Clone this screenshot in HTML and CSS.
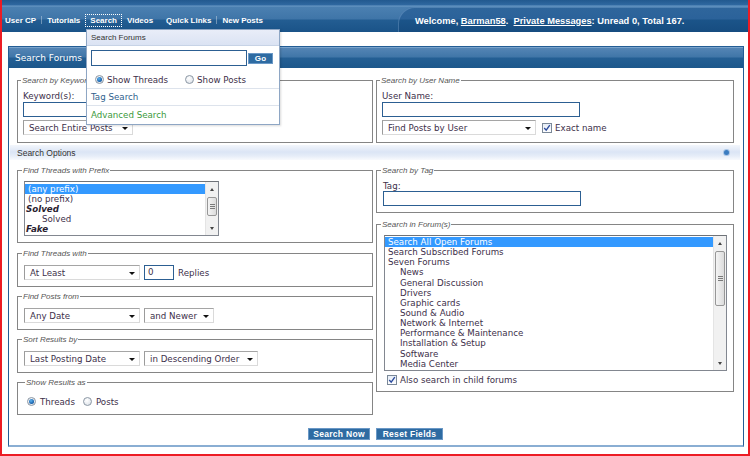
FILE: index.html
```html
<!DOCTYPE html>
<html>
<head>
<meta charset="utf-8">
<title>Search Forums</title>
<link rel="stylesheet" href="styles.css">
</head>
<body>
<div class="frame">
  <header class="navbar">
    <nav class="nav">
      <a class="nav-item first">User CP</a><span class="sep"></span>
      <a class="nav-item">Tutorials</a>
      <a class="nav-item active">Search</a>
      <a class="nav-item">Videos</a>
      <a class="nav-item wide">Quick Links</a><span class="sep"></span>
      <a class="nav-item">New Posts</a>
    </nav>
    <div class="welcome">Welcome, <u>Barman58</u>.&nbsp;&nbsp;<u>Private Messages</u>: Unread 0, Total 167.</div>
  </header>

  <main class="content">
    <section class="panel">
      <div class="panel-head">Search Forums</div>
      <div class="panel-body">
        <div class="cols">
          <fieldset class="fs fs-top">
            <legend>Search by Keyword</legend>
            <div class="label">Keyword(s):</div>
            <div class="input w-wide"></div>
            <div class="select w-entire mt3"><span>Search Entire Posts</span><i class="arrow"></i></div>
          </fieldset>
          <fieldset class="fs fs-top">
            <legend>Search by User Name</legend>
            <div class="label">User Name:</div>
            <div class="input w-wide"></div>
            <div class="line mt3">
              <div class="select w-user"><span>Find Posts by User</span><i class="arrow"></i></div>
              <span class="check"><svg viewBox="0 0 10 10" width="8" height="8"><path d="M1.5 5 L4 7.8 L8.5 1.5" stroke="#2b4b9e" stroke-width="1.7" fill="none"/></svg></span>
              <span class="check-label">Exact name</span>
            </div>
          </fieldset>
        </div>

        <div class="options-bar"><span>Search Options</span><i class="dot"></i></div>

        <div class="cols lower">
          <div class="col">
            <fieldset class="fs fs-prefix">
              <legend>Find Threads with Prefix</legend>
              <div class="listbox prefix">
                <div class="list-items">
                  <div class="opt sel">(any prefix)</div>
                  <div class="opt">(no prefix)</div>
                  <div class="opt group">Solved</div>
                  <div class="opt sub">Solved</div>
                  <div class="opt group">Fake</div>
                </div>
                <div class="scrollbar">
                  <div class="sb-btn"><i class="up"></i></div>
                  <div class="sb-track"><div class="thumb t-prefix"><i class="grip"></i></div></div>
                  <div class="sb-btn"><i class="down"></i></div>
                </div>
              </div>
            </fieldset>

            <fieldset class="fs fs-row">
              <legend>Find Threads with</legend>
              <div class="line">
                <div class="select w-116"><span>At Least</span><i class="arrow"></i></div>
                <div class="input w-num">0</div>
                <span class="after">Replies</span>
              </div>
            </fieldset>

            <fieldset class="fs fs-row">
              <legend>Find Posts from</legend>
              <div class="line">
                <div class="select w-116"><span>Any Date</span><i class="arrow"></i></div>
                <div class="select w-newer"><span>and Newer</span><i class="arrow"></i></div>
              </div>
            </fieldset>

            <fieldset class="fs fs-row">
              <legend>Sort Results by</legend>
              <div class="line">
                <div class="select w-116"><span>Last Posting Date</span><i class="arrow"></i></div>
                <div class="select w-order"><span>in Descending Order</span><i class="arrow"></i></div>
              </div>
            </fieldset>

            <fieldset class="fs fs-show">
              <legend>Show Results as</legend>
              <div class="line radios">
                <span class="radio on"></span><span class="radio-label">Threads</span>
                <span class="radio"></span><span class="radio-label">Posts</span>
              </div>
            </fieldset>
          </div>

          <div class="col">
            <fieldset class="fs fs-tag">
              <legend>Search by Tag</legend>
              <div class="label short">Tag:</div>
              <div class="input w-wide"></div>
            </fieldset>

            <fieldset class="fs fs-forums">
              <legend>Search in Forum(s)</legend>
              <div class="listbox forums">
                <div class="list-items">
                  <div class="opt sel">Search All Open Forums</div>
                  <div class="opt">Search Subscribed Forums</div>
                  <div class="opt">Seven Forums</div>
                  <div class="opt sub">News</div>
                  <div class="opt sub">General Discussion</div>
                  <div class="opt sub">Drivers</div>
                  <div class="opt sub">Graphic cards</div>
                  <div class="opt sub">Sound &amp; Audio</div>
                  <div class="opt sub">Network &amp; Internet</div>
                  <div class="opt sub">Performance &amp; Maintenance</div>
                  <div class="opt sub">Installation &amp; Setup</div>
                  <div class="opt sub">Software</div>
                  <div class="opt sub">Media Center</div>
                </div>
                <div class="scrollbar">
                  <div class="sb-btn"><i class="up"></i></div>
                  <div class="sb-track"><div class="thumb t-forums"><i class="grip"></i></div></div>
                  <div class="sb-btn"><i class="down"></i></div>
                </div>
              </div>
              <div class="line child">
                <span class="check"><svg viewBox="0 0 10 10" width="8" height="8"><path d="M1.5 5 L4 7.8 L8.5 1.5" stroke="#2b4b9e" stroke-width="1.7" fill="none"/></svg></span>
                <span class="check-label">Also search in child forums</span>
              </div>
            </fieldset>
          </div>
        </div>

        <div class="actions">
          <button class="btn b-search">Search Now</button>
          <button class="btn b-reset">Reset Fields</button>
        </div>
      </div>
    </section>
  </main>

  <div class="dropdown">
    <div class="dd-head">Search Forums</div>
    <div class="dd-search">
      <div class="input dd-input"></div>
      <button class="btn go">Go</button>
    </div>
    <div class="dd-radios">
      <span class="radio on"></span><span class="radio-label">Show Threads</span>
      <span class="radio r2"></span><span class="radio-label">Show Posts</span>
    </div>
    <div class="dd-link tag">Tag Search</div>
    <div class="dd-link adv">Advanced Search</div>
  </div>
</div>
</body>
</html>
```

FILE: styles.css
```css
* { box-sizing: border-box; }
html, body { margin: 0; padding: 0; background: #fff; }
body {
  width: 750px;
  height: 456px;
  overflow: hidden;
  font-family: "DejaVu Sans", Verdana, sans-serif;
  font-size: 8.7px;
  color: #3d2f4a;
}
.frame {
  position: relative;
  width: 750px;
  height: 456px;
  border: 2px solid #ec1c24;
  border-top: 0;
  background: #fff;
}

/* ---------- top navigation ---------- */
.navbar {
  height: 32px;
  display: flex;
  background: linear-gradient(#22598f 0, #2f68a0 5px, #6c9bc7 6px, #4b80b1 7px, #3f75a8 19px, #235d92 20px, #1a5388 32px);
}
.nav {
  display: flex;
  align-items: center;
  padding: 8px 0 0 0;
  font-family: "Liberation Sans", Arial, sans-serif;
  font-weight: bold;
  font-size: 8px;
  color: #fff;
}
.nav-item {
  height: 13px;
  line-height: 11px;
  padding: 0 4px;
  border: 1px solid transparent;
  display: flex;
  align-items: center;
}
.nav-item.first { padding-left: 2px; }
.nav-item.active { border: 1px dotted #fff; }
.nav-item.wide { margin-left: 3px; }
.sep {
  width: 1px;
  height: 8px;
  background: rgba(255,255,255,0.35);
}
.welcome {
  margin: 7px 0 0 auto;
  width: 350px;
  padding: 2px 0 0 17px;
  display: flex;
  align-items: center;
  border-top-left-radius: 16px;
  background: linear-gradient(#2f669c 0, #2b629a 12px, #1b5489 13px, #164c80 25px);
  box-shadow: inset 1px 1px 0 rgba(140,180,220,0.35);
  font-family: "Liberation Sans", Arial, sans-serif;
  font-weight: bold;
  font-size: 9.3px;
  color: #fff;
  white-space: pre;
}
.welcome u { text-decoration: underline; }

/* ---------- panel ---------- */
.content { padding: 14px 4px 0 6px; }
.panel {
  border: 1px solid #235d95;
  border-bottom: 2px solid #8aaed3;
  background: #fff;
}
.panel-head {
  height: 21px;
  padding-left: 6px;
  display: flex;
  align-items: center;
  color: #fff;
  font-size: 9px;
  background: linear-gradient(#5686b6 0, #4076a8 10px, #245f94 11px, #1c578b 21px);
  box-shadow: inset 0 1px 0 #7aa3cb;
}
.panel-body { padding: 8px 9px 5px 8px; }

.cols {
  display: grid;
  grid-template-columns: 356px 358px;
  column-gap: 3px;
  align-items: start;
}
.cols.lower { margin-top: 6px; }
.col { display: flex; flex-direction: column; }

/* ---------- fieldsets ---------- */
.fs {
  margin: 0;
  min-width: 0;
  border: 1px solid #858585;
  padding: 6px 5px 6px 5px;
}
.fs legend {
  padding: 0 1px;
  margin-left: -2px;
  font-family: "Liberation Sans", Arial, sans-serif;
  font-style: italic;
  font-size: 8px;
  line-height: 9px;
  color: #555;
}
.fs-top { padding: 6px 5px 7px 5px; }
.fs-prefix { padding: 6px 6px 6px 6px; }
.fs-row { margin-top: 5px; padding: 7px 6px 6px 6px; }
.col .fs-prefix + .fs-row { margin-top: 6px; }
.fs-show { margin-top: 5px; padding: 7px 6px 5px 9px; }
.fs-tag { padding: 6px 6px 6px 6px; }
.fs-forums { margin-top: 7px; padding: 6px 6px 5px 6px; }

.label { line-height: 11px; height: 11px; }
.label.short { line-height: 10px; height: 10px; }
.mt3 { margin-top: 3px; }
.line { display: flex; align-items: center; }

.input {
  height: 15px;
  border: 1px solid #2c5f92;
  background: #fff;
  padding: 0 3px;
  line-height: 13px;
}
.w-wide { width: 198px; }
.w-num { width: 30px; margin-left: 4px; }
.after { margin-left: 4px; }

.select {
  height: 15px;
  display: flex;
  align-items: center;
  justify-content: space-between;
  padding: 0 4px 0 5px;
  border: 1px solid #dadada;
  border-left-color: #9b9b9b;
  border-top-color: #a5a5a5;
  background: #fff;
  white-space: nowrap;
}
.select + .select { margin-left: 4px; }
.arrow {
  width: 0; height: 0;
  border-left: 3px solid transparent;
  border-right: 3px solid transparent;
  border-top: 3px solid #111;
  margin-top: 2px;
}
.w-entire { width: 110px; }
.w-user { width: 154px; }
.w-116 { width: 116px; }
.w-newer { width: 70px; }
.w-order { width: 114px; }

.check {
  width: 10px; height: 10px;
  border: 1px solid #7a8898;
  background: linear-gradient(#e6edf6, #fdfdfe);
  display: inline-flex;
  align-items: center;
  justify-content: center;
  margin-left: 6px;
}
.check-label { margin-left: 3px; }

/* ---------- options bar ---------- */
.options-bar {
  margin: 2px -6px 0 -7px;
  height: 15px;
  padding: 0 11px 0 7px;
  display: flex;
  align-items: center;
  justify-content: space-between;
  font-family: "Liberation Sans", Arial, sans-serif;
  font-size: 8.5px;
  color: #333;
  background: linear-gradient(#f3f6fc 0, #dbe5f5 7px, #e6edf8 11px, #f8fafd 15px);
}
.dot {
  width: 5px; height: 5px;
  border-radius: 50%;
  background: #3b7cc0;
  box-shadow: 0 0 0 1px #a9c5e6;
}

/* ---------- list boxes ---------- */
.listbox {
  display: flex;
  border: 1px solid #828790;
  border-top-color: #6e7278;
  background: #fff;
  overflow: hidden;
}
.listbox.prefix { width: 195px; height: 55px; }
.listbox.forums { width: 343px; height: 136px; margin-left: 1px; }
.list-items { flex: 1; overflow: hidden; padding-top: 1px; }
.listbox.prefix .list-items { padding-top: 2px; }
.opt { line-height: 10px; height: 10px; padding-left: 3px; white-space: nowrap; }
.forums .opt { line-height: 10.15px; height: 10.15px; }
.opt.sel { background: #3399ff; color: #fff; }
.opt.group { font-weight: bold; font-style: italic; padding-left: 1px; color: #2a2230; }
.prefix .opt.sub { padding-left: 17px; }
.forums .opt.sub { padding-left: 15px; }

.scrollbar {
  width: 13px;
  display: flex;
  flex-direction: column;
  background: #f1f1f1;
  border-left: 1px solid #e4e4e4;
}
.sb-btn { height: 14px; display: flex; align-items: center; justify-content: center; }
.up, .down {
  width: 0; height: 0;
  border-left: 2.5px solid transparent;
  border-right: 2.5px solid transparent;
}
.up { border-bottom: 3px solid #444; }
.down { border-top: 3px solid #444; }
.sb-track { flex: 1; }
.thumb {
  margin: 0 1px;
  border: 1px solid #979797;
  border-radius: 2px;
  background: linear-gradient(to right, #f4f4f4, #dcdcdc);
  display: flex;
  align-items: center;
  justify-content: center;
}
.t-prefix { margin-top: 1px; height: 19px; }
.t-forums { margin-top: 1px; height: 55px; }
.grip {
  width: 5px; height: 5px;
  border-top: 1px solid #7a7a7a;
  border-bottom: 1px solid #7a7a7a;
  position: relative;
}
.grip::after {
  content: "";
  position: absolute;
  left: 0; right: 0; top: 1px;
  border-top: 1px solid #7a7a7a;
}

.child { margin-top: 3px; height: 12px; }
.child .check { margin-left: 4px; }

/* ---------- radios ---------- */
.radios { height: 15px; }
.radio {
  width: 9px; height: 9px;
  border-radius: 50%;
  border: 1px solid #8b97a4;
  background: radial-gradient(circle at 40% 35%, #ffffff, #d7dde5);
  display: inline-flex;
  align-items: center;
  justify-content: center;
  flex: none;
}
.radio.on::after {
  content: "";
  width: 5px; height: 5px;
  border-radius: 50%;
  background: radial-gradient(circle at 40% 35%, #5fb3f0, #115ca8 70%, #0c3f78);
}
.radio-label { margin-left: 4px; margin-right: 8px; }

/* ---------- buttons ---------- */
.actions {
  margin-top: 13px;
  display: flex;
  justify-content: center;
  gap: 6px;
  padding-left: 0;
}
.btn {
  height: 12px;
  padding: 0;
  border: 1px solid #6a98c6;
  background: #2e6ba2;
  color: #fff;
  font-family: "Liberation Sans", Arial, sans-serif;
  font-weight: bold;
  font-size: 8.5px;
  line-height: 10px;
  letter-spacing: 0.3px;
}
.b-search { width: 62px; }
.b-reset { width: 67px; }

/* ---------- dropdown menu ---------- */
.dropdown {
  position: absolute;
  left: 84px;
  top: 29px;
  width: 194px;
  height: 96px;
  border: 1px solid #8ea6c4;
  background: #fff;
  box-shadow: 1px 1px 2px rgba(0,0,0,0.15);
}
.dd-head {
  height: 16px;
  padding-left: 4px;
  display: flex;
  align-items: center;
  font-family: "Liberation Sans", Arial, sans-serif;
  font-size: 8px;
  color: #333;
  background: linear-gradient(#e9edf8, #dbe3f3);
  border-bottom: 1px solid #c7d3e6;
}
.dd-search {
  display: flex;
  align-items: center;
  padding: 4px 0 0 4px;
}
.dd-input { width: 156px; height: 16px; }
.go { width: 25px; height: 11px; margin-left: 1px; font-size: 8px; line-height: 9px; }
.dd-radios {
  display: flex;
  align-items: center;
  height: 16px;
  margin-top: 7px;
  padding-left: 8px;
  padding-bottom: 2px;
  border-bottom: 1px solid #dde3ec;
}
.dd-radios .radio-label { margin-left: 3px; margin-right: 17px; }
.dd-link {
  height: 17px;
  padding-left: 4px;
  display: flex;
  align-items: center;
}
.dd-link.tag { color: #2f5f8e; border-bottom: 1px solid #dde3ec; }
.dd-link.adv { color: #3c9a3c; }
```
